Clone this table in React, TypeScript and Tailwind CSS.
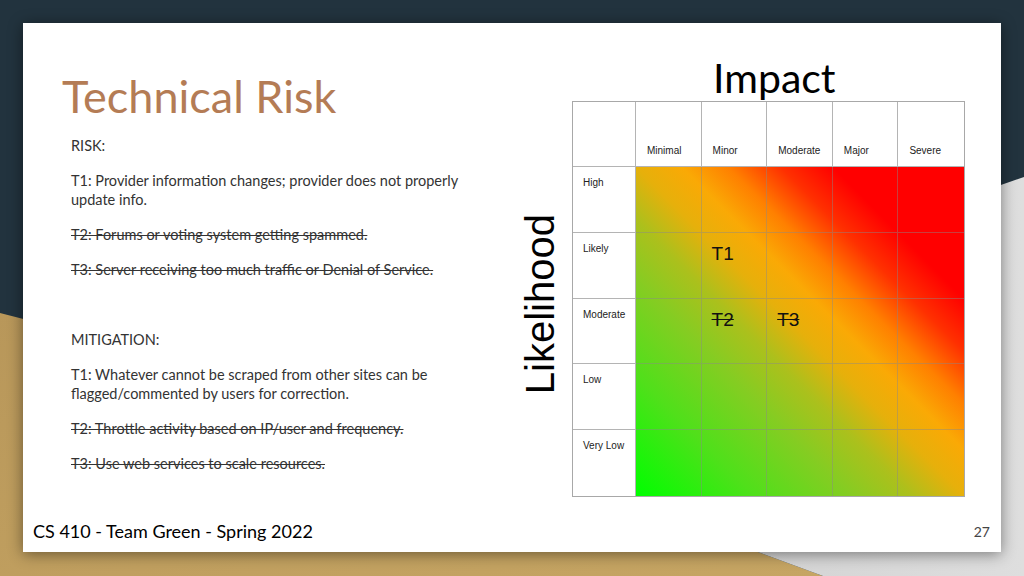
import React from "react";

const impacts = ["Minimal", "Minor", "Moderate", "Major", "Severe"];
const likelihoods = ["High", "Likely", "Moderate", "Low", "Very Low"];

// threats placed on the matrix, keyed by "row-col"
const marks: Record<string, { label: string; struck: boolean }> = {
  "1-1": { label: "T1", struck: false },
  "2-1": { label: "T2", struck: true },
  "2-2": { label: "T3", struck: true },
};

const risks = [
  { text: "T1: Provider information changes; provider does not properly update info.", struck: false },
  { text: "T2: Forums or voting system getting spammed.", struck: true },
  { text: "T3: Server receiving too much traffic or Denial of Service.", struck: true },
];

const mitigations = [
  { text: "T1: Whatever cannot be scraped from other sites can be flagged/commented by users for correction.", struck: false },
  { text: "T2: Throttle activity based on IP/user and frequency.", struck: true },
  { text: "T3: Use web services to scale resources.", struck: true },
];

function Para({ text, struck }: { text: string; struck?: boolean }) {
  return <p className={`mb-4 ${struck ? "line-through decoration-[#333]" : ""}`}>{text}</p>;
}

function Backdrop() {
  return (
    <svg className="absolute inset-0" width="1024" height="576" viewBox="0 0 1024 576">
      <defs>
        <linearGradient id="gold" x1="0" y1="0" x2="1" y2="1">
          <stop offset="0" stopColor="#b8975a" />
          <stop offset="1" stopColor="#c6a563" />
        </linearGradient>
        <linearGradient id="grey" x1="0" y1="0" x2="1" y2="0">
          <stop offset="0" stopColor="#c4c4c4" />
          <stop offset="1" stopColor="#dedede" />
        </linearGradient>
      </defs>
      <rect width="1024" height="576" fill="#22333e" />
      <polygon points="0,313 366,407 823,576 0,576" fill="url(#gold)" />
      <polygon points="366,407 1024,177 1024,576 823,576" fill="url(#grey)" />
    </svg>
  );
}

function RiskMatrix() {
  return (
    <div className="grid grid-cols-[63px_328px] grid-rows-[65px_329px] border border-[#a8a8a8] font-['Liberation_Sans',Arial,sans-serif] text-[10px] text-[#222]">
      <div className="border-r border-b border-[#b4b4b4] bg-white" />
      <div className="grid grid-cols-5 border-b border-[#b4b4b4] bg-white">
        {impacts.map((c, i) => (
          <div key={c} className={`flex items-end pl-[11px] pb-[8px] ${i < 4 ? "border-r border-[#b4b4b4]" : ""}`}>
            {c}
          </div>
        ))}
      </div>
      <div className="grid grid-rows-5 border-r border-[#b4b4b4] bg-white">
        {likelihoods.map((r, i) => (
          <div key={r} className={`pl-[10px] pt-[10px] leading-3 ${i < 4 ? "border-b border-[#b4b4b4]" : ""}`}>
            {r}
          </div>
        ))}
      </div>
      <div className="grid grid-cols-5 grid-rows-5 bg-[linear-gradient(to_top_right,#00ff00_0%,#4fe01a_18%,#86cc22_33%,#acc01c_42%,#e6b00b_50%,#faa905_57%,#ff8000_64%,#ff3000_72%,#ff0000_80%)]">
        {likelihoods.map((r, ri) =>
          impacts.map((c, ci) => {
            const m = marks[`${ri}-${ci}`];
            return (
              <div
                key={`${r}-${c}`}
                className={`pl-[10px] pt-[11px] text-[19px] leading-5 text-[#111] ${ci < 4 ? "border-r border-[#8a8a8a]/45" : ""} ${ri < 4 ? "border-b border-[#8a8a8a]/45" : ""}`}
              >
                {m && <span className={m.struck ? "line-through" : ""}>{m.label}</span>}
              </div>
            );
          })
        )}
      </div>
    </div>
  );
}

export default function App() {
  return (
    <div className="relative w-[1024px] h-[576px] overflow-hidden">
      <Backdrop />
      <div className="relative ml-[23px] mt-[23px] w-[978px] h-[529px] bg-white shadow-[0_2px_14px_rgba(0,0,0,0.45)] flex flex-col">
        <div className="flex flex-1">
          {/* left column: title and text */}
          <div className="w-[497px] pl-[39px] pt-[51px]">
            <h1 className="font-['Lato',sans-serif] text-[45px] leading-none text-[#b47c55]">Technical Risk</h1>
            <div className="mt-[17px] pl-[9px] w-[425px] font-['Lato',sans-serif] text-[14.5px] leading-[19px] text-[#333]">
              <Para text="RISK:" />
              {risks.map((r) => (
                <Para key={r.text} text={r.text} struck={r.struck} />
              ))}
              <p className="mb-4">&nbsp;</p>
              <Para text="MITIGATION:" />
              {mitigations.map((r) => (
                <Para key={r.text} text={r.text} struck={r.struck} />
              ))}
            </div>
          </div>

          {/* right column: impact / likelihood matrix */}
          <div className="flex flex-col pt-[34px]">
            <div className="pl-[193px] mb-[3px] font-['Lato',sans-serif] text-[41px] leading-none text-black">Impact</div>
            <div className="flex">
              <div className="w-10 flex items-center justify-center pt-[10px]">
                <span className="[writing-mode:vertical-rl] rotate-180 font-['Liberation_Sans',Arial,sans-serif] text-[40px] leading-none text-black">
                  Likelihood
                </span>
              </div>
              <div className="ml-3">
                <RiskMatrix />
              </div>
            </div>
          </div>
        </div>

        <div className="h-10 flex items-center justify-between pl-[10px] pr-[11px] pb-[2px] font-['Lato',sans-serif]">
          <span className="text-[18px] text-black">CS 410 - Team Green - Spring 2022</span>
          <span className="text-[14px] text-[#444]">27</span>
        </div>
      </div>
    </div>
  );
}
